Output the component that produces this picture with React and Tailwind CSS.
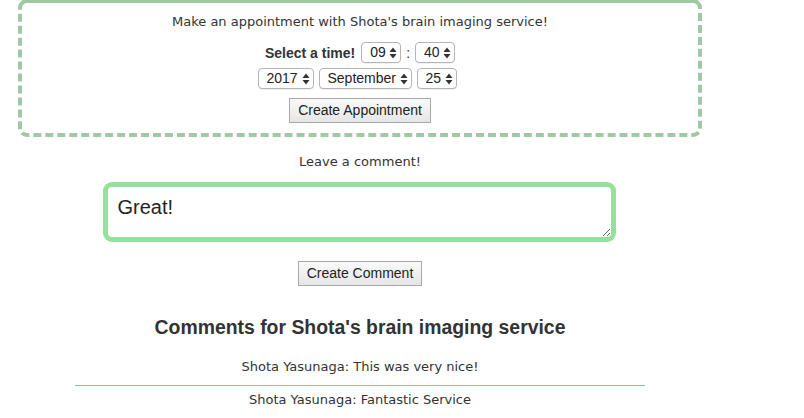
import { useState } from "react";

const verdana = { fontFamily: "'DejaVu Sans', Verdana, sans-serif" };
const helv = { fontFamily: "'Liberation Sans', Arial, sans-serif" };

function Arrows() {
  return (
    <svg width="8" height="12" viewBox="0 0 8 12" className="pointer-events-none absolute right-[4px] top-1/2 -translate-y-1/2">
      <path d="M4 0.5 L7.5 5 L0.5 5 Z" fill="#333" />
      <path d="M4 11.5 L7.5 7 L0.5 7 Z" fill="#333" />
    </svg>
  );
}

function Select({ value, options, width }) {
  const [v, setV] = useState(value);
  return (
    <div className="relative flex">
      <select
        value={v}
        onChange={(e) => setV(e.target.value)}
        className={`${width} h-[21px] appearance-none rounded-[4px] border border-[#b4b4b4] bg-white pl-[8px] pr-[14px] text-[14px] leading-[19px] text-[#222] shadow-[0_1px_0_rgba(0,0,0,0.05)] outline-none`}
        style={helv}
      >
        {options.map((o) => (
          <option key={o}>{o}</option>
        ))}
      </select>
      <Arrows />
    </div>
  );
}

export default function App() {
  const [comment, setComment] = useState("Great!");
  const hours = Array.from({ length: 24 }, (_, i) => String(i).padStart(2, "0"));
  const mins = ["00", "10", "20", "30", "40", "50"];
  const months = ["January", "February", "March", "April", "May", "June", "July", "August", "September", "October", "November", "December"];
  const days = Array.from({ length: 31 }, (_, i) => String(i + 1));

  return (
    <div className="min-h-screen bg-white text-[#333]">
      <div className="w-[720px] overflow-hidden">
        {/* APPOINTMENT BOX */}
        <div className="mx-[18px] -mt-[1px] rounded-[9px] border-[4px] border-dashed border-[#9fc9a3] [border-top-style:solid] pb-[10px] pt-[11px] text-center">
          <p className="text-[13px] leading-[16px]" style={verdana}>
            Make an appointment with Shota's brain imaging service!
          </p>

          <div className="mt-[12px] flex h-[21px] items-center justify-center gap-[5px]">
            <span className="mr-[1px] text-[14px] font-bold leading-[16px]" style={helv}>
              Select a time!
            </span>
            <Select value="09" options={hours} width="w-[40px]" />
            <span className="text-[14px] leading-[16px]" style={helv}>:</span>
            <Select value="40" options={mins} width="w-[40px]" />
          </div>

          <div className="mt-[5px] flex h-[21px] items-center justify-center gap-[5px] pr-[6px]">
            <Select value="2017" options={["2016", "2017", "2018"]} width="w-[56px]" />
            <Select value="September" options={months} width="w-[93px]" />
            <Select value="25" options={days} width="w-[40px]" />
          </div>

          <div className="mt-[9px] flex justify-center">
            <button
              className="h-[25px] border border-[#a8a8a8] bg-gradient-to-b from-[#fafafa] to-[#e6e6e6] px-[8px] text-[14px] text-[#222]"
              style={helv}
            >
              Create Appointment
            </button>
          </div>
        </div>

        {/* COMMENT FORM */}
        <p className="mt-[17px] text-center text-[13px] leading-[16px]" style={verdana}>
          Leave a comment!
        </p>

        <div className="mt-[12px] flex justify-center">
          <textarea
            value={comment}
            onChange={(e) => setComment(e.target.value)}
            className="ml-[-2px] h-[60px] w-[513px] rounded-[9px] border-[5px] border-[#95e09c] px-[10px] pb-[10px] pt-[8px] text-[20px] leading-[24px] text-[#222] outline-none"
            style={helv}
          />
        </div>

        <div className="mt-[19px] flex justify-center">
          <button
            className="h-[25px] border border-[#a8a8a8] bg-gradient-to-b from-[#fafafa] to-[#e6e6e6] px-[8px] text-[14px] text-[#222]"
            style={helv}
          >
            Create Comment
          </button>
        </div>

        {/* COMMENTS */}
        <h3 className="mt-[29px] text-center text-[19.4px] font-bold leading-[24px] text-[#333]" style={helv}>
          Comments for Shota's brain imaging service
        </h3>

        <div className="mx-auto mt-[20px] w-[570px] text-center text-[13px]" style={verdana}>
          <p className="leading-[16px]">Shota Yasunaga: This was very nice!</p>
          <div className="mt-[10px] h-px bg-[#8cc694]" />
          <p className="mt-[6px] leading-[16px]">Shota Yasunaga: Fantastic Service</p>
        </div>
      </div>
    </div>
  );
}
